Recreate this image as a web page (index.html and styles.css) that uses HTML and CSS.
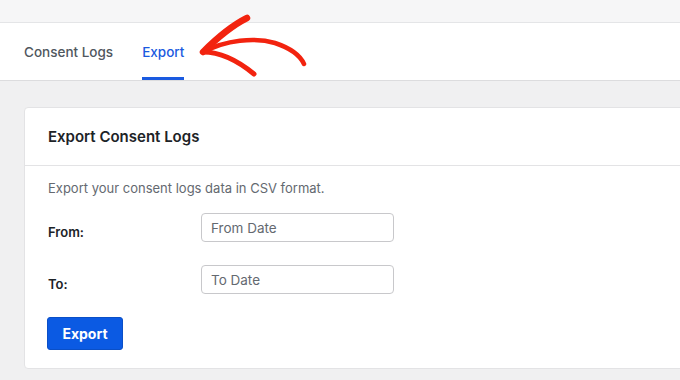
FILE: index.html
```html
<!DOCTYPE html>
<html>
<head lang="en">
    <meta charset="UTF-8">
    <title>Consent Logs - Export</title>
    <link rel="stylesheet" href="styles.css">
</head>
<body>
<div class="g-top-strip"></div>
<div class="g-tabs">
    <ul class="m-tab-list">
        <li><a href="#">Consent Logs</a></li>
        <li class="active"><a href="#">Export</a></li>
    </ul>
    <svg class="m-arrow" width="120" height="75" viewBox="0 0 120 75">
        <path d="M8 42 C 20 30, 36 16, 52 8" fill="none" stroke="#f2230f" stroke-width="6.5" stroke-linecap="round"/>
        <path d="M9 42 C 30 30, 60 27, 80 33 C 95 38, 105 45, 109 54" fill="none" stroke="#f2230f" stroke-width="4.5" stroke-linecap="round"/>
        <path d="M8 42 C 25 42, 42 50, 59 64" fill="none" stroke="#f2230f" stroke-width="5" stroke-linecap="round"/>
    </svg>
</div>
<div class="g-main">
    <div class="m-card">
        <div class="card-hd">Export Consent Logs</div>
        <div class="card-bd">
            <p class="desc">Export your consent logs data in CSV format.</p>
            <div class="form-row">
                <label class="lbl">From:</label>
                <input class="ipt" type="text" placeholder="From Date">
            </div>
            <div class="form-row">
                <label class="lbl">To:</label>
                <input class="ipt" type="text" placeholder="To Date">
            </div>
            <button class="btn">Export</button>
        </div>
    </div>
</div>
</body>
</html>
```

FILE: styles.css
```css
* {
    margin: 0;
    padding: 0;
    box-sizing: border-box;
}
body {
    background-color: #f0f0f1;
    font-family: Inter, "Liberation Sans", sans-serif;
    overflow: hidden;
}
ul {
    list-style: none;
}
a {
    text-decoration: none;
}
.g-top-strip {
    height: 23px;
    background-color: #f6f6f7;
    border-bottom: 1px solid #e4e5e7;
}
.g-tabs {
    position: relative;
    height: 58px;
    background-color: #fff;
    border-bottom: 1px solid #dcdcde;
}
.m-tab-list {
    display: flex;
    gap: 29px;
    height: 100%;
    padding-left: 24px;
}
.m-tab-list>li {
    height: 100%;
    display: flex;
    align-items: center;
    border-bottom: 3px solid transparent;
    padding-top: 3px;
}
.m-tab-list>li>a {
    color: #50575e;
    font-size: 13.5px;
    font-weight: 500;
}
.m-tab-list>li.active {
    border-bottom-color: #1a5ae0;
}
.m-tab-list>li.active>a {
    color: #1a5ae0;
}
.m-arrow {
    position: absolute;
    left: 195px;
    top: -13px;
}
.g-main {
    padding: 26px 0 0 24px;
}
.m-card {
    margin-right: -10px;
    background-color: #fff;
    border: 1px solid #e3e3e5;
    border-radius: 4px;
}
.card-hd {
    height: 58px;
    line-height: 58px;
    padding-left: 23px;
    font-size: 15px;
    font-weight: 600;
    color: #1d2327;
    border-bottom: 1px solid #e3e3e5;
}
.card-bd {
    padding: 12px 23px 18px;
}
.desc {
    font-size: 13px;
    line-height: 20px;
    color: #646970;
    margin-bottom: 15px;
}
.form-row {
    display: flex;
    align-items: center;
    margin-bottom: 23px;
}
.lbl {
    width: 153px;
    padding-top: 8px;
    font-size: 13px;
    font-weight: 600;
    color: #1d2327;
}
.ipt {
    width: 193px;
    height: 29px;
    padding: 0 9px;
    border: 1px solid #c8c8cb;
    border-radius: 4px;
    font-family: inherit;
    font-size: 13.5px;
    color: #1d2327;
}
.ipt::placeholder {
    color: #646970;
}
.btn {
    margin-left: -1px;
    width: 76px;
    height: 33px;
    border: 1px solid #0a4fc7;
    border-radius: 3px;
    background-color: #0b5ae3;
    color: #fff;
    font-family: inherit;
    font-size: 14px;
    font-weight: 700;
}
```
